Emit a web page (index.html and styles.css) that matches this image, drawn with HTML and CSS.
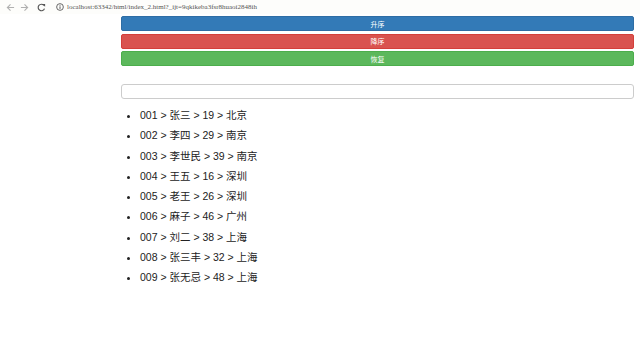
FILE: index.html
```html
<!DOCTYPE html>
<html lang="zh">
<head>
    <meta charset="UTF-8">
    <meta name="viewport" content="width=device-width, initial-scale=1.0">
    <title>index_2</title>
    <link rel="stylesheet" href="styles.css">
</head>
<body>
    <!-- 浏览器地址栏 -->
    <div class="toolbar">
        <svg class="nav-icon" width="9" height="9" viewBox="0 0 10 10"><path d="M9 5H1.5M5 1.5L1.5 5 5 8.5" fill="none" stroke="#b0b0b0" stroke-width="1.2"/></svg>
        <svg class="nav-icon" width="9" height="9" viewBox="0 0 10 10"><path d="M1 5h7.5M5 1.5L8.5 5 5 8.5" fill="none" stroke="#b0b0b0" stroke-width="1.2"/></svg>
        <svg class="nav-icon reload" width="9" height="9" viewBox="0 0 10 10"><path d="M8.3 6.2A3.6 3.6 0 1 1 7.6 2.6" fill="none" stroke="#555" stroke-width="1.3"/><path d="M5.8 1H9v3.2z" fill="#555"/></svg>
        <div class="address">
            <svg width="8" height="8" viewBox="0 0 10 10"><circle cx="5" cy="5" r="4.2" fill="none" stroke="#555" stroke-width="1.1"/><path d="M5 4.2v3.2M5 2.4v1" stroke="#555" stroke-width="1.2"/></svg>
            <span class="url">localhost:63342/html/index_2.html?_ijt=9qkikeba3fsr8huaoi2848ih</span>
        </div>
    </div>

    <div class="content">
        <div class="buttons">
            <button class="btn btn-blue">升序</button>
            <button class="btn btn-red">降序</button>
            <button class="btn btn-green">恢复</button>
        </div>

        <input class="search" type="text">

        <ul id="list" class="list"></ul>
    </div>

    <script>
        const people = [
            ['001', '张三', 19, '北京'],
            ['002', '李四', 29, '南京'],
            ['003', '李世民', 39, '南京'],
            ['004', '王五', 16, '深圳'],
            ['005', '老王', 26, '深圳'],
            ['006', '麻子', 46, '广州'],
            ['007', '刘二', 38, '上海'],
            ['008', '张三丰', 32, '上海'],
            ['009', '张无忌', 48, '上海']
        ];

        // 渲染列表
        const list = document.getElementById('list');
        people.forEach(p => {
            const li = document.createElement('li');
            li.textContent = p.join(' > ');
            list.appendChild(li);
        });
    </script>
</body>
</html>
```

FILE: styles.css
```css
body {
    font-family: "Liberation Sans", "Noto Sans CJK SC", sans-serif;
    margin: 0;
    background-color: #fff;
    color: #222;
}
.toolbar {
    display: flex;
    align-items: center;
    height: 14px;
    padding-left: 4px;
    background-color: #fdfdfb;
}
.nav-icon {
    margin: 0 3px 0 2px;
}
.nav-icon.reload {
    margin-left: 5px;
    margin-right: 7px;
}
.address {
    display: flex;
    align-items: center;
    gap: 3px;
    height: 11px;
    padding: 0 6px 0 3px;
}
.url {
    font-family: "Liberation Serif", serif;
    font-size: 7px;
    color: #555;
    white-space: nowrap;
}
.content {
    margin: 2px 6px 0 121px;
}
.buttons {
    display: flex;
    flex-direction: column;
    gap: 2.5px;
}
.btn {
    height: 15px;
    padding: 0;
    border: 1px solid transparent;
    border-radius: 2px;
    color: #fff;
    font-family: inherit;
    font-size: 7px;
}
.btn-blue {
    background-color: #337ab7;
    border-color: #2e6da4;
}
.btn-red {
    background-color: #d9534f;
    border-color: #d43f3a;
}
.btn-green {
    background-color: #5cb85c;
    border-color: #4cae4c;
}
.search {
    display: block;
    box-sizing: border-box;
    width: 100%;
    height: 15px;
    margin-top: 18px;
    border: 1px solid #ccc;
    border-radius: 3px;
}
.list {
    margin: 6px 0 0;
    padding-left: 19px;
    font-size: 10.5px;
}
.list li {
    line-height: 20.3px;
}
```
